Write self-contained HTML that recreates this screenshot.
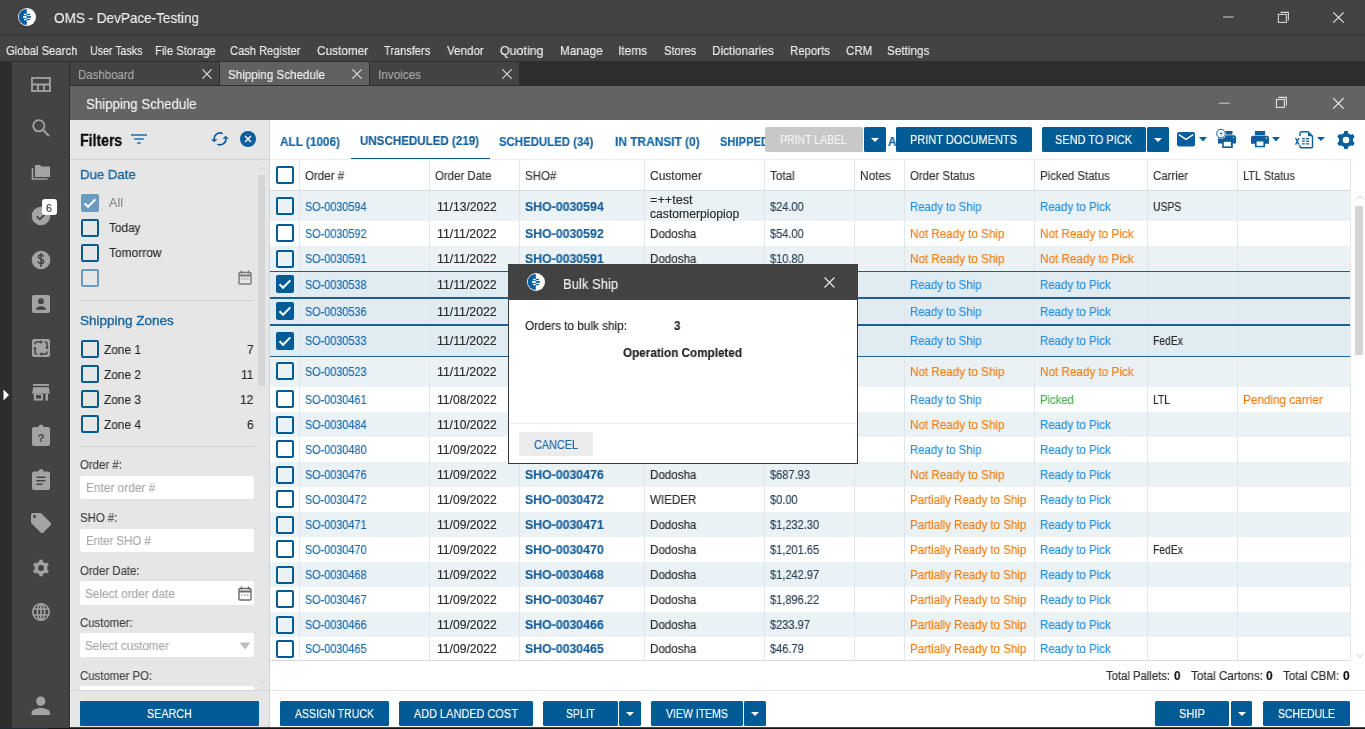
<!DOCTYPE html>
<html><head><meta charset="utf-8">
<style>
*{margin:0;padding:0;box-sizing:border-box}
html,body{width:1365px;height:729px;overflow:hidden;background:#434343;font-family:"Liberation Sans",sans-serif;position:relative}
.a{position:absolute}
.t{position:absolute;white-space:nowrap;height:100px;line-height:100px;will-change:transform;-webkit-text-stroke:0.15px currentColor}
svg{position:absolute;overflow:visible}
</style></head><body>

<div class="a" style="left:0px;top:0px;width:1365px;height:34px;background:#434343;"></div>
<div class="a" style="left:0px;top:34px;width:1365px;height:1px;background:#363636;"></div>
<div class="a" style="left:0px;top:35px;width:1365px;height:26px;background:#434343;"></div>
<div class="a" style="left:0px;top:61px;width:1365px;height:1px;background:#2e2e2e;"></div>
<div class="a" style="left:0px;top:62px;width:12px;height:667px;background:#2d2d2d;"></div>
<div class="a" style="left:12px;top:62px;width:58px;height:667px;background:#434343;"></div>
<div class="a" style="left:70px;top:61px;width:1295px;height:25px;background:#2e2e2e;"></div>
<div class="a" style="left:70px;top:86px;width:1295px;height:34px;background:#636363;"></div>
<div class="a" style="left:70px;top:120px;width:199px;height:607px;background:#e6e6e6;"></div>
<div class="a" style="left:269px;top:120px;width:1px;height:607px;background:#d4d4d4;"></div>
<div class="a" style="left:270px;top:120px;width:1095px;height:607px;background:#ffffff;"></div>
<div class="a" style="left:69px;top:62px;width:1px;height:666px;background:#2e2e2e;"></div>
<div class="a" style="left:70px;top:120px;width:1px;height:607px;background:#efefef;"></div>
<div class="a" style="left:0px;top:728px;width:48px;height:1px;background:#1c2e33;"></div>
<div class="a" style="left:48px;top:728px;width:1317px;height:1px;background:#151515;"></div>
<svg style="left:18px;top:8px" width="18" height="18" viewBox="0 0 18 18">
<circle cx="9" cy="9" r="9" fill="#fff"/>
<path d="M8.8 0.9 A8.1 8.1 0 0 0 8.8 17.1 Z" fill="#0a5fa0"/>
<rect x="6" y="5.8" width="2.8" height="1.4" fill="#fff"/><rect x="5.1" y="8.1" width="3.7" height="1.8" fill="#fff"/><rect x="6" y="10.8" width="2.8" height="1.4" fill="#fff"/>
<rect x="8.8" y="5.8" width="3.2" height="1.4" fill="#0a5fa0"/><rect x="8.8" y="8.1" width="4.1" height="1.8" fill="#0a5fa0"/><rect x="8.8" y="10.8" width="3.2" height="1.4" fill="#0a5fa0"/>
</svg>
<div class="t" style="left:53.5px;top:-31.9px;font-size:15.0px;color:#efefef;letter-spacing:0.00px;transform:scaleX(0.9013);transform-origin:0 0;">OMS - DevPace-Testing</div>
<svg style="left:1220px;top:8px" width="130" height="20" viewBox="0 0 130 20">
<rect x="3" y="8.4" width="10.5" height="1.2" fill="#bdbdbd"/>
<rect x="58.4" y="6.4" width="8" height="8" fill="none" stroke="#d6d6d6" stroke-width="1.1"/>
<path d="M60.4 4.4h8v8" fill="none" stroke="#d6d6d6" stroke-width="1.1"/>
<path d="M113.3 4.3l10.4 10.4M123.7 4.3L113.3 14.7" stroke="#e4e4e4" stroke-width="1.2"/>
</svg>
<div class="t" style="left:6.0px;top:1.3px;font-size:13.0px;color:#ececec;letter-spacing:0.00px;transform:scaleX(0.8655);transform-origin:0 0;">Global Search</div>
<div class="t" style="left:89.9px;top:1.3px;font-size:13.0px;color:#ececec;letter-spacing:0.00px;transform:scaleX(0.8181);transform-origin:0 0;">User Tasks</div>
<div class="t" style="left:154.9px;top:1.3px;font-size:13.0px;color:#ececec;letter-spacing:0.00px;transform:scaleX(0.8660);transform-origin:0 0;">File Storage</div>
<div class="t" style="left:230.2px;top:1.3px;font-size:13.0px;color:#ececec;letter-spacing:0.00px;transform:scaleX(0.8547);transform-origin:0 0;">Cash Register</div>
<div class="t" style="left:317.0px;top:1.3px;font-size:13.0px;color:#ececec;letter-spacing:0.00px;transform:scaleX(0.9086);transform-origin:0 0;">Customer</div>
<div class="t" style="left:384.4px;top:1.3px;font-size:13.0px;color:#ececec;letter-spacing:0.00px;transform:scaleX(0.8490);transform-origin:0 0;">Transfers</div>
<div class="t" style="left:446.7px;top:1.3px;font-size:13.0px;color:#ececec;letter-spacing:0.00px;transform:scaleX(0.8907);transform-origin:0 0;">Vendor</div>
<div class="t" style="left:499.5px;top:1.3px;font-size:13.0px;color:#ececec;letter-spacing:0.00px;transform:scaleX(0.9554);transform-origin:0 0;">Quoting</div>
<div class="t" style="left:559.6px;top:1.3px;font-size:13.0px;color:#ececec;letter-spacing:0.00px;transform:scaleX(0.9089);transform-origin:0 0;">Manage</div>
<div class="t" style="left:618.4px;top:1.3px;font-size:13.0px;color:#ececec;letter-spacing:0.00px;transform:scaleX(0.9124);transform-origin:0 0;">Items</div>
<div class="t" style="left:663.5px;top:1.3px;font-size:13.0px;color:#ececec;letter-spacing:0.00px;transform:scaleX(0.8570);transform-origin:0 0;">Stores</div>
<div class="t" style="left:711.8px;top:1.3px;font-size:13.0px;color:#ececec;letter-spacing:0.00px;transform:scaleX(0.9085);transform-origin:0 0;">Dictionaries</div>
<div class="t" style="left:789.6px;top:1.3px;font-size:13.0px;color:#ececec;letter-spacing:0.00px;transform:scaleX(0.8766);transform-origin:0 0;">Reports</div>
<div class="t" style="left:845.6px;top:1.3px;font-size:13.0px;color:#ececec;letter-spacing:0.00px;transform:scaleX(0.8850);transform-origin:0 0;">CRM</div>
<div class="t" style="left:887.1px;top:1.3px;font-size:13.0px;color:#ececec;letter-spacing:0.00px;transform:scaleX(0.9005);transform-origin:0 0;">Settings</div>
<div class="a" style="left:70px;top:62px;width:149px;height:23px;background:#434343;"></div>
<div class="a" style="left:220px;top:62px;width:149px;height:23px;background:#616161;"></div>
<div class="a" style="left:370px;top:62px;width:149px;height:23px;background:#434343;"></div>
<div class="t" style="left:78.1px;top:25.3px;font-size:12.5px;color:#a9a9a9;letter-spacing:0.00px;transform:scaleX(0.9158);transform-origin:0 0;">Dashboard</div>
<div class="t" style="left:228.2px;top:25.3px;font-size:12.5px;color:#f2f2f2;letter-spacing:0.00px;transform:scaleX(0.9305);transform-origin:0 0;">Shipping Schedule</div>
<div class="t" style="left:377.6px;top:25.3px;font-size:12.5px;color:#a9a9a9;letter-spacing:0.00px;transform:scaleX(0.9377);transform-origin:0 0;">Invoices</div>
<svg style="left:202px;top:69px" width="10" height="10"><path d="M0.4 0.4l9.2 9.2M9.6 0.4l-9.2 9.2" stroke="#dcdcdc" stroke-width="1.2"/></svg>
<svg style="left:351.7px;top:69px" width="10" height="10"><path d="M0.4 0.4l9.2 9.2M9.6 0.4l-9.2 9.2" stroke="#dcdcdc" stroke-width="1.2"/></svg>
<svg style="left:501.6px;top:69px" width="10" height="10"><path d="M0.4 0.4l9.2 9.2M9.6 0.4l-9.2 9.2" stroke="#dcdcdc" stroke-width="1.2"/></svg>
<div class="t" style="left:86.0px;top:54.3px;font-size:14.5px;color:#f4f4f4;letter-spacing:0.00px;transform:scaleX(0.9146);transform-origin:0 0;">Shipping Schedule</div>
<svg style="left:1215px;top:95px" width="135" height="16" viewBox="0 0 135 16">
<rect x="4" y="7.6" width="10.7" height="1.2" fill="#bdbdbd"/>
<rect x="61.4" y="4.4" width="8" height="8" fill="none" stroke="#e0e0e0" stroke-width="1.1"/>
<path d="M63.4 2.4h8v8" fill="none" stroke="#e0e0e0" stroke-width="1.1"/>
<path d="M118.2 3.2l10.4 10.4M128.6 3.2L118.2 13.6" stroke="#ececec" stroke-width="1.2"/>
</svg>
<svg style="left:30.5px;top:76.5px" width="20" height="15" viewBox="0 0 20 15"><rect x="1" y="1" width="18" height="13" fill="none" stroke="#a3a3a3" stroke-width="1.8"/><path d="M1 7.5h18M7 7.5v6.5M13 7.5v6.5" stroke="#a3a3a3" stroke-width="1.8"/></svg>
<svg style="left:30.5px;top:118.0px" width="20" height="20" viewBox="0 0 20 20"><circle cx="7.8" cy="7.8" r="5.6" fill="none" stroke="#a3a3a3" stroke-width="1.8"/><path d="M12 12l6 6" stroke="#a3a3a3" stroke-width="1.9"/></svg>
<svg style="left:30.5px;top:164.0px" width="20" height="16" viewBox="0 0 20 16"><path d="M1.5 4v11h15" fill="none" stroke="#a3a3a3" stroke-width="1.6"/><path d="M4 1h5l1.5 1.6H19v10.4H4z" fill="#a3a3a3"/></svg>
<svg style="left:28.5px;top:204.0px" width="24" height="24" viewBox="0 0 24 24"><circle cx="12" cy="12" r="9.3" fill="#a3a3a3"/><path d="M7.8 12.3l3 3 5.5-5.5" fill="none" stroke="#434343" stroke-width="1.7"/></svg>
<div class="a" style="left:42px;top:199px;width:15px;height:16px;background:#fff;border-radius:3px"></div>
<div class="t" style="left:46.0px;top:157.8px;font-size:11.0px;color:#333;letter-spacing:0.00px;transform:scaleX(0.9500);transform-origin:0 0;">6</div>
<svg style="left:28.5px;top:248.0px" width="24" height="24" viewBox="0 0 24 24"><circle cx="12" cy="12" r="9.3" fill="#a3a3a3"/><path d="M14.6 8.6c-.3-1.1-1.3-1.7-2.6-1.7-1.5 0-2.6.8-2.6 2 0 2.6 5.3 1.6 5.3 4.3 0 1.3-1.1 2.1-2.7 2.1-1.5 0-2.6-.7-2.8-1.9M12 5.3v13.4" fill="none" stroke="#434343" stroke-width="1.5"/></svg>
<svg style="left:31.5px;top:295.0px" width="18" height="18" viewBox="0 0 18 18"><rect x="0" y="0" width="18" height="18" rx="2" fill="#a3a3a3"/><circle cx="9" cy="6.2" r="2.9" fill="#434343"/><path d="M3.8 14.8c0-2.4 3-3.6 5.2-3.6s5.2 1.2 5.2 3.6z" fill="#434343"/></svg>
<svg style="left:31.5px;top:339.0px" width="18" height="18" viewBox="0 0 18 18"><rect x="0" y="0" width="18" height="18" rx="2.2" fill="#a3a3a3"/><path d="M2.9 5.6V4.6Q2.9 3.1 4.4 3.1H8.6M12.8 3.1H13.5Q15 3.1 15 4.6V8.2M15.1 12.4V13.5Q15.1 15 13.6 15H9.8M5.2 15H4.5Q3 15 3 13.5V9.8" fill="none" stroke="#434343" stroke-width="1.5"/><path d="M8.3 1.2L11 3.1 8.3 5zM13.1 7.9L15 10.6 16.9 7.9zM10.1 13.1L7.4 15 10.1 16.9zM1.1 10.1L3 7.4 4.9 10.1z" fill="#434343"/></svg>
<svg style="left:30.5px;top:383.5px" width="20" height="17" viewBox="0 0 20 17"><rect x="2" y="0" width="16" height="1.8" fill="#a3a3a3"/><path d="M1 9.5L2.3 3.2h15.4L19 9.5z" fill="#a3a3a3"/><path d="M2.8 9.5v7h9.2v-7zM14.5 9.5h2.5v7h-2.5z" fill="#a3a3a3"/><rect x="5" y="11" width="5" height="3.6" fill="#434343"/></svg>
<svg style="left:31.5px;top:423.5px" width="18" height="22" viewBox="0 0 18 22"><rect x="0" y="3" width="18" height="19" rx="2" fill="#a3a3a3"/><path d="M6 3.5h6L10.5 0.8h-3z" fill="#a3a3a3"/><text x="9" y="17.5" font-size="11" font-weight="bold" text-anchor="middle" fill="#434343" font-family="Liberation Sans">?</text></svg>
<svg style="left:31.5px;top:468.5px" width="18" height="21" viewBox="0 0 18 21"><rect x="0" y="2.5" width="18" height="18.5" rx="2" fill="#a3a3a3"/><path d="M6 3h6L10.5 0.3h-3z" fill="#a3a3a3"/><path d="M4.5 8.2h9M4.5 11.7h9M4.5 15.2h6" stroke="#434343" stroke-width="1.6"/></svg>
<svg style="left:28.5px;top:511.0px" width="24" height="24" viewBox="0 0 24 24"><path d="M21.41 11.58l-9-9C12.05 2.22 11.55 2 11 2H4c-1.1 0-2 .9-2 2v7c0 .55.22 1.05.59 1.42l9 9c.36.36.86.58 1.41.58.55 0 1.05-.22 1.41-.59l7-7c.37-.36.59-.86.59-1.41 0-.55-.23-1.06-.59-1.42zM5.5 7C4.67 7 4 6.33 4 5.5S4.67 4 5.5 4 7 4.67 7 5.5 6.33 7 5.5 7z" fill="#a3a3a3" transform="translate(12 12) rotate(0) translate(-12 -12)"/></svg>
<svg style="left:30.5px;top:557.7px" width="20" height="20" viewBox="0 0 24 24"><path fill-rule="evenodd" d="M9.78 4.73 L10.09 2.18 L13.91 2.18 L14.22 4.73 A7.60 7.60 0 0 1 17.18 6.44 L19.55 5.44 L21.46 8.74 L19.41 10.29 A7.60 7.60 0 0 1 19.41 13.71 L21.46 15.26 L19.55 18.56 L17.18 17.56 A7.60 7.60 0 0 1 14.22 19.27 L13.91 21.82 L10.09 21.82 L9.78 19.27 A7.60 7.60 0 0 1 6.82 17.56 L4.45 18.56 L2.54 15.26 L4.59 13.71 A7.60 7.60 0 0 1 4.59 10.29 L2.54 8.74 L4.45 5.44 L6.82 6.44 A7.60 7.60 0 0 1 9.78 4.73 Z M8.50 12.00 a3.50 3.50 0 1 0 7.00 0 a3.50 3.50 0 1 0 -7.00 0Z" fill="#a3a3a3"/></svg>
<svg style="left:30.5px;top:602.0px" width="20" height="20" viewBox="0 0 20 20"><g fill="none" stroke="#a3a3a3" stroke-width="1.6"><circle cx="10" cy="10" r="8.2"/><ellipse cx="10" cy="10" rx="3.6" ry="8.2"/><path d="M2 7h16M2 13h16M10 1.8v16.4"/></g></svg>
<svg style="left:26.7px;top:692.2px" width="27.6" height="27.6" viewBox="0 0 24 24"><path d="M12 12c2.21 0 4-1.79 4-4s-1.79-4-4-4-4 1.79-4 4 1.79 4 4 4zm0 2c-2.67 0-8 1.34-8 4v2h16v-2c0-2.66-5.33-4-8-4z" fill="#a3a3a3"/></svg>
<svg style="left:1.5px;top:389.0px" width="8" height="12" viewBox="0 0 8 12"><path d="M1.5 0.5L7 6 1.5 11.5z" fill="#fff"/></svg>
<div class="t" style="left:80.0px;top:90.8px;font-size:16.0px;color:#0a0a0a;font-weight:bold;letter-spacing:0.00px;transform:scaleX(0.8789);transform-origin:0 0;-webkit-text-stroke:0.3px #0a0a0a;">Filters</div>
<svg style="left:131.0px;top:133.8px" width="16" height="10" viewBox="0 0 16 10"><path d="M0 0.9h16M3.2 4.9h9.6M6.2 8.9h3.6" stroke="#1b6fb0" stroke-width="1.5"/></svg>
<svg style="left:208px;top:128px" width="24" height="22" viewBox="0 0 24 22"><path d="M14.8 5.6A5.9 5.9 0 0 0 6.2 11.3M9.3 16.1A5.9 5.9 0 0 0 18 10.7" fill="none" stroke="#0b5d9b" stroke-width="1.6"/><path d="M3 11.2h6.4l-3.2 3z M14.5 10.7h6.3l-3.2-3z" fill="#0b5d9b"/></svg>
<svg style="left:240.0px;top:131.0px" width="16" height="16" viewBox="0 0 16 16"><circle cx="8" cy="8" r="8" fill="#0b5d9b"/><path d="M5 5l6 6M11 5l-6 6" stroke="#fff" stroke-width="1.5"/></svg>
<div class="a" style="left:70px;top:159px;width:199px;height:1px;background:#d2d2d2;"></div>
<div class="a" style="left:258px;top:175px;width:7px;height:211px;background:#d5d5d5;"></div>
<svg style="left:257.5px;top:165.5px" width="8" height="5" viewBox="0 0 8 5"><path d="M0.5 4.5L4 1l3.5 3.5" fill="none" stroke="#d0d0d0" stroke-width="1"/></svg>
<svg style="left:257.5px;top:678.5px" width="8" height="5" viewBox="0 0 8 5"><path d="M0.5 0.5L4 4l3.5-3.5" fill="none" stroke="#d0d0d0" stroke-width="1"/></svg>
<div class="t" style="left:79.9px;top:125.3px;font-size:13.5px;color:#1566a4;letter-spacing:0.00px;transform:scaleX(0.9766);transform-origin:0 0;-webkit-text-stroke:0.35px currentColor;">Due Date</div>
<div class="a" style="left:81px;top:194px;width:18px;height:18px;background:#6a9cc2;border-radius:2px"></div>
<svg style="left:81px;top:194px" width="18" height="18" viewBox="0 0 18 18"><path d="M3.5 9.2l3.6 3.6 7.2-7.4" fill="none" stroke="#fff" stroke-width="2"/></svg>
<div class="t" style="left:108.8px;top:153.3px;font-size:12.5px;color:#8a8a8a;letter-spacing:0.00px;transform:scaleX(1.0078);transform-origin:0 0;">All</div>
<div class="a" style="left:81px;top:219px;width:18px;height:18px;border:2px solid #015c95;border-radius:2px"></div>
<div class="t" style="left:108.8px;top:178.3px;font-size:12.5px;color:#2a2a2a;letter-spacing:0.00px;transform:scaleX(0.9444);transform-origin:0 0;">Today</div>
<div class="a" style="left:81px;top:244px;width:18px;height:18px;border:2px solid #015c95;border-radius:2px"></div>
<div class="t" style="left:108.8px;top:203.3px;font-size:12.5px;color:#2a2a2a;letter-spacing:0.00px;transform:scaleX(0.9568);transform-origin:0 0;">Tomorrow</div>
<div class="a" style="left:81px;top:269px;width:18px;height:18px;border:2px solid #6a9cc2;border-radius:2px"></div>
<svg style="left:238.0px;top:270.0px" width="14" height="15" viewBox="0 0 14 15"><rect x="1" y="2.5" width="12" height="11.5" rx="1" fill="none" stroke="#7a7a7a" stroke-width="1.4"/><path d="M1 5.5h12" stroke="#7a7a7a" stroke-width="2"/><path d="M3.5 0.5v3M10.5 0.5v3" stroke="#7a7a7a" stroke-width="1.4"/><path d="M3.5 9h1.4M6.3 9h1.4M9.1 9h1.4" stroke="#7a7a7a" stroke-width="1.2"/></svg>
<div class="a" style="left:80px;top:300px;width:174px;height:1px;background:#d0d0d0;"></div>
<div class="t" style="left:79.6px;top:271.1px;font-size:13.5px;color:#1566a4;letter-spacing:0.00px;transform:scaleX(0.9998);transform-origin:0 0;-webkit-text-stroke:0.35px currentColor;">Shipping Zones</div>
<div class="a" style="left:81px;top:340px;width:18px;height:18px;border:2px solid #015c95;border-radius:2px"></div>
<div class="t" style="left:103.6px;top:299.8px;font-size:12.5px;color:#2a2a2a;letter-spacing:0.00px;transform:scaleX(0.9508);transform-origin:0 0;">Zone 1</div>
<div class="t" style="left:247.0px;top:299.8px;font-size:12.5px;color:#2a2a2a;letter-spacing:0.00px;transform:scaleX(0.9500);transform-origin:0 0;">7</div>
<div class="a" style="left:81px;top:365px;width:18px;height:18px;border:2px solid #015c95;border-radius:2px"></div>
<div class="t" style="left:103.6px;top:324.8px;font-size:12.5px;color:#2a2a2a;letter-spacing:0.00px;transform:scaleX(0.9508);transform-origin:0 0;">Zone 2</div>
<div class="t" style="left:241.3px;top:324.8px;font-size:12.5px;color:#2a2a2a;letter-spacing:0.00px;transform:scaleX(0.9500);transform-origin:0 0;">11</div>
<div class="a" style="left:81px;top:390px;width:18px;height:18px;border:2px solid #015c95;border-radius:2px"></div>
<div class="t" style="left:103.6px;top:349.8px;font-size:12.5px;color:#2a2a2a;letter-spacing:0.00px;transform:scaleX(0.9508);transform-origin:0 0;">Zone 3</div>
<div class="t" style="left:240.4px;top:349.8px;font-size:12.5px;color:#2a2a2a;letter-spacing:0.00px;transform:scaleX(0.9500);transform-origin:0 0;">12</div>
<div class="a" style="left:81px;top:415px;width:18px;height:18px;border:2px solid #015c95;border-radius:2px"></div>
<div class="t" style="left:103.6px;top:374.8px;font-size:12.5px;color:#2a2a2a;letter-spacing:0.00px;transform:scaleX(0.9508);transform-origin:0 0;">Zone 4</div>
<div class="t" style="left:247.0px;top:374.8px;font-size:12.5px;color:#2a2a2a;letter-spacing:0.00px;transform:scaleX(0.9500);transform-origin:0 0;">6</div>
<div class="a" style="left:80px;top:446px;width:174px;height:1px;background:#d0d0d0;"></div>
<div class="t" style="left:80.1px;top:414.8px;font-size:12.0px;color:#404040;letter-spacing:0.00px;transform:scaleX(0.9519);transform-origin:0 0;">Order #:</div>
<div class="a" style="left:80px;top:476px;width:174px;height:23px;background:#fff;border-radius:2px"></div>
<div class="t" style="left:86.0px;top:438.3px;font-size:12.5px;color:#a8a8a8;letter-spacing:0.00px;transform:scaleX(0.9499);transform-origin:0 0;">Enter order #</div>
<div class="t" style="left:80.1px;top:467.8px;font-size:12.0px;color:#404040;letter-spacing:0.00px;transform:scaleX(0.9500);transform-origin:0 0;">SHO #:</div>
<div class="a" style="left:80px;top:529px;width:174px;height:23px;background:#fff;border-radius:2px"></div>
<div class="t" style="left:86.0px;top:491.3px;font-size:12.5px;color:#a8a8a8;letter-spacing:0.00px;transform:scaleX(0.9130);transform-origin:0 0;">Enter SHO #</div>
<div class="t" style="left:80.1px;top:520.8px;font-size:12.0px;color:#404040;letter-spacing:0.00px;transform:scaleX(0.9500);transform-origin:0 0;">Order Date:</div>
<div class="a" style="left:80px;top:581px;width:174px;height:24px;background:#fff;border-radius:2px"></div>
<div class="t" style="left:84.6px;top:543.8px;font-size:12.5px;color:#a8a8a8;letter-spacing:0.00px;transform:scaleX(0.9454);transform-origin:0 0;">Select order date</div>
<svg style="left:237.5px;top:585.5px" width="14" height="15" viewBox="0 0 14 15"><rect x="1" y="2.5" width="12" height="11.5" rx="1" fill="none" stroke="#6a6a6a" stroke-width="1.4"/><path d="M1 5.5h12" stroke="#6a6a6a" stroke-width="2"/><path d="M3.5 0.5v3M10.5 0.5v3" stroke="#6a6a6a" stroke-width="1.4"/><path d="M3.5 9h1.4M6.3 9h1.4M9.1 9h1.4" stroke="#6a6a6a" stroke-width="1.2"/></svg>
<div class="t" style="left:80.1px;top:572.8px;font-size:12.0px;color:#404040;letter-spacing:0.00px;transform:scaleX(0.9500);transform-origin:0 0;">Customer:</div>
<div class="a" style="left:80px;top:633px;width:174px;height:24px;background:#fff;border-radius:2px"></div>
<div class="t" style="left:84.6px;top:595.8px;font-size:12.5px;color:#a8a8a8;letter-spacing:0.00px;transform:scaleX(0.9373);transform-origin:0 0;">Select customer</div>
<svg style="left:239.0px;top:642.0px" width="12" height="8" viewBox="0 0 12 8"><path d="M0.5 0.5h11L6 7.5z" fill="#bdbdbd"/></svg>
<div class="t" style="left:79.6px;top:625.8px;font-size:12.0px;color:#444;letter-spacing:0.00px;transform:scaleX(0.9500);transform-origin:0 0;">Customer PO:</div>
<div class="a" style="left:80px;top:686px;width:174px;height:4px;background:#fff;border-radius:2px 2px 0 0"></div>
<div class="a" style="left:70px;top:690px;width:199px;height:1px;background:#d6d6d6;"></div>
<div class="a" style="left:80px;top:701px;width:179px;height:25px;background:#015c95;border-radius:1px"></div>
<div class="t" style="left:147.1px;top:664.3px;font-size:12.5px;color:#fff;letter-spacing:0.00px;transform:scaleX(0.8638);transform-origin:0 0;">SEARCH</div>
<div class="t" style="left:279.8px;top:92.1px;font-size:12.5px;color:#1665a3;font-weight:bold;letter-spacing:0.00px;transform:scaleX(0.9422);transform-origin:0 0;">ALL (1006)</div>
<div class="t" style="left:360.1px;top:90.8px;font-size:12.5px;color:#135e99;font-weight:bold;letter-spacing:0.00px;transform:scaleX(0.9261);transform-origin:0 0;">UNSCHEDULED (219)</div>
<div class="a" style="left:350.5px;top:158px;width:139.5px;height:2.4px;background:#0b5c99;"></div>
<div class="t" style="left:499.3px;top:92.1px;font-size:12.5px;color:#1665a3;font-weight:bold;letter-spacing:0.00px;transform:scaleX(0.9122);transform-origin:0 0;">SCHEDULED (34)</div>
<div class="t" style="left:614.9px;top:92.1px;font-size:12.5px;color:#1665a3;font-weight:bold;letter-spacing:0.00px;transform:scaleX(0.9529);transform-origin:0 0;">IN TRANSIT (0)</div>
<div class="t" style="left:720.1px;top:92.1px;font-size:12.5px;color:#1665a3;font-weight:bold;letter-spacing:0.00px;transform:scaleX(0.8935);transform-origin:0 0;">SHIPPED (12)</div>
<div class="a" style="left:765px;top:127px;width:98px;height:25px;background:#c8c8c8;border-radius:2px"></div>
<div class="t" style="left:779.6px;top:90.3px;font-size:12.5px;color:#f4f4f4;letter-spacing:0.00px;transform:scaleX(0.8410);transform-origin:0 0;">PRINT LABEL</div>
<div class="a" style="left:864px;top:127px;width:22px;height:25px;background:#015c95;border-radius:1.5px"></div>
<svg style="left:871.0px;top:138.0px" width="8" height="4" viewBox="0 0 8 4"><path d="M0 0h8L4 4z" fill="#fff"/></svg>
<div class="t" style="left:887.6px;top:92.1px;font-size:12.5px;color:#1665a3;font-weight:bold;letter-spacing:0.00px;transform:scaleX(0.9500);transform-origin:0 0;">A</div>
<div class="a" style="left:896px;top:127px;width:136px;height:25px;background:#015c95;border-radius:1.5px"></div>
<div class="t" style="left:910.1px;top:90.3px;font-size:12.5px;color:#fff;letter-spacing:0.00px;transform:scaleX(0.8821);transform-origin:0 0;">PRINT DOCUMENTS</div>
<div class="a" style="left:1042px;top:127px;width:104px;height:25px;background:#015c95;border-radius:1.5px"></div>
<div class="t" style="left:1055.1px;top:90.3px;font-size:12.5px;color:#fff;letter-spacing:0.00px;transform:scaleX(0.8774);transform-origin:0 0;">SEND TO PICK</div>
<div class="a" style="left:1147px;top:127px;width:22px;height:25px;background:#015c95;border-radius:1.5px"></div>
<svg style="left:1154.0px;top:138.0px" width="8" height="4" viewBox="0 0 8 4"><path d="M0 0h8L4 4z" fill="#fff"/></svg>
<svg style="left:1177.0px;top:131.9px" width="18" height="14.5" viewBox="0 0 18 14.5"><rect x="0" y="0" width="18" height="14.5" rx="2" fill="#0b5d9b"/><path d="M1.8 2.6l7.2 4.8 7.2-4.8" fill="none" stroke="#fff" stroke-width="1.3"/></svg>
<svg style="left:1198.5px;top:136.8px" width="8" height="4.5" viewBox="0 0 8 4.5"><path d="M0 0h8L4 4.5z" fill="#0b5d9b"/></svg>
<svg style="left:1217.5px;top:131.2px" width="18" height="17" viewBox="0 0 18 17"><path d="M4.5 0h10v3.6h-10z" fill="#0b5d9b"/><path d="M2 4.2h14a2 2 0 0 1 2 2v6.3h-3.2v4.5H4.2v-4.5H0V6.2a2 2 0 0 1 2-2z" fill="#0b5d9b"/><rect x="5.8" y="10.8" width="7.2" height="4.6" fill="#fff"/><circle cx="15.5" cy="6.6" r=".7" fill="#fff"/><circle cx="3" cy="2.6" r="5.2" fill="#fff"/><circle cx="3" cy="2.6" r="4.3" fill="none" stroke="#0b5d9b" stroke-width="1"/><path d="M3.6 0L1.8 3h1.6l-.8 2.4 2-3.2H3z" fill="#0b5d9b"/></svg>
<svg style="left:1251.0px;top:131.2px" width="18" height="16.2" viewBox="0 0 18 16.2"><path d="M3.9 0h10.2v4.3H3.9z" fill="#0b5d9b"/><path d="M2 4.8h14a2 2 0 0 1 2 2v6H14.1v3.4H3.9v-3.4H0v-6a2 2 0 0 1 2-2z" fill="#0b5d9b"/><rect x="5.6" y="10.5" width="6.8" height="4.3" fill="#fff"/><circle cx="15.3" cy="7" r=".7" fill="#fff"/></svg>
<svg style="left:1272.3px;top:137.2px" width="8" height="4.5" viewBox="0 0 8 4.5"><path d="M0 0h8L4 4.5z" fill="#0b5d9b"/></svg>
<svg style="left:1294.5px;top:130.9px" width="19" height="17" viewBox="0 0 19 17"><path d="M5 5V2.2A1.5 1.5 0 0 1 6.5 0.7h6.5l4.5 4.5v10.3a1.2 1.2 0 0 1-1.2 1.2H6.2A1.2 1.2 0 0 1 5 15.5v-1.5" fill="none" stroke="#0b5d9b" stroke-width="1.4"/><path d="M13 0.7v4.5h4.5z" fill="#0b5d9b"/><path d="M0.6 7l3.4 6.6M4 7L0.6 13.6" stroke="#0b5d9b" stroke-width="1.3"/><path d="M7 7.6h2.8M11 7.6h3.2M7 10.2h2.8M11 10.2h3.2M7 12.8h2.8M11 12.8h3.2" stroke="#0b5d9b" stroke-width="1.3"/></svg>
<svg style="left:1316.5px;top:136.9px" width="8" height="4" viewBox="0 0 8 4"><path d="M0 0h8L4 4z" fill="#0b5d9b"/></svg>
<svg style="left:1335.0px;top:128.5px" width="22" height="22" viewBox="0 0 24 24"><path fill-rule="evenodd" d="M9.72 4.54 L10.09 2.18 L13.91 2.18 L14.28 4.54 A7.80 7.80 0 0 1 17.32 6.30 L19.55 5.44 L21.46 8.74 L19.60 10.25 A7.80 7.80 0 0 1 19.60 13.75 L21.46 15.26 L19.55 18.56 L17.32 17.70 A7.80 7.80 0 0 1 14.28 19.46 L13.91 21.82 L10.09 21.82 L9.72 19.46 A7.80 7.80 0 0 1 6.68 17.70 L4.45 18.56 L2.54 15.26 L4.40 13.75 A7.80 7.80 0 0 1 4.40 10.25 L2.54 8.74 L4.45 5.44 L6.68 6.30 A7.80 7.80 0 0 1 9.72 4.54 Z M8.40 12.00 a3.60 3.60 0 1 0 7.20 0 a3.60 3.60 0 1 0 -7.20 0Z" fill="#0b5d9b"/></svg>
<div class="a" style="left:270px;top:159px;width:1081px;height:1px;background:#eeeeee;"></div>
<div class="a" style="left:270px;top:190px;width:1081px;height:1px;background:#d9dde0;"></div>
<div class="a" style="left:276px;top:166px;width:18px;height:18px;border:2px solid #015c95;border-radius:2px"></div>
<div class="t" style="left:305.0px;top:125.8px;font-size:12.0px;color:#333;letter-spacing:0.00px;transform:scaleX(0.9611);transform-origin:0 0;">Order #</div>
<div class="t" style="left:435.1px;top:125.8px;font-size:12.0px;color:#333;letter-spacing:0.00px;transform:scaleX(0.9519);transform-origin:0 0;">Order Date</div>
<div class="t" style="left:524.7px;top:125.8px;font-size:12.0px;color:#333;letter-spacing:0.00px;transform:scaleX(0.9578);transform-origin:0 0;">SHO#</div>
<div class="t" style="left:649.8px;top:125.8px;font-size:12.0px;color:#333;letter-spacing:0.00px;transform:scaleX(0.9978);transform-origin:0 0;">Customer</div>
<div class="t" style="left:769.7px;top:125.8px;font-size:12.0px;color:#333;letter-spacing:0.00px;transform:scaleX(0.9705);transform-origin:0 0;">Total</div>
<div class="t" style="left:859.7px;top:125.8px;font-size:12.0px;color:#333;letter-spacing:0.00px;transform:scaleX(0.9857);transform-origin:0 0;">Notes</div>
<div class="t" style="left:909.8px;top:125.8px;font-size:12.0px;color:#333;letter-spacing:0.00px;transform:scaleX(0.9526);transform-origin:0 0;">Order Status</div>
<div class="t" style="left:1040.0px;top:125.8px;font-size:12.0px;color:#333;letter-spacing:0.00px;transform:scaleX(0.9513);transform-origin:0 0;">Picked Status</div>
<div class="t" style="left:1152.8px;top:125.8px;font-size:12.0px;color:#333;letter-spacing:0.00px;transform:scaleX(0.9545);transform-origin:0 0;">Carrier</div>
<div class="t" style="left:1243.0px;top:125.8px;font-size:12.0px;color:#333;letter-spacing:0.00px;transform:scaleX(0.9137);transform-origin:0 0;">LTL Status</div>
<div class="a" style="left:270px;top:191px;width:1081px;height:30px;background:#eaf2f6;"></div>
<div class="a" style="left:270px;top:221px;width:1081px;height:25px;background:#ffffff;"></div>
<div class="a" style="left:270px;top:246px;width:1081px;height:25px;background:#eaf2f6;"></div>
<div class="a" style="left:270px;top:271px;width:1081px;height:26px;background:#e1ebf2;"></div>
<div class="a" style="left:270px;top:297px;width:1081px;height:28px;background:#e1ebf2;"></div>
<div class="a" style="left:270px;top:325px;width:1081px;height:31px;background:#e1ebf2;"></div>
<div class="a" style="left:270px;top:356px;width:1081px;height:31px;background:#eaf2f6;"></div>
<div class="a" style="left:270px;top:387px;width:1081px;height:25px;background:#ffffff;"></div>
<div class="a" style="left:270px;top:412px;width:1081px;height:25px;background:#eaf2f6;"></div>
<div class="a" style="left:270px;top:437px;width:1081px;height:25px;background:#ffffff;"></div>
<div class="a" style="left:270px;top:462px;width:1081px;height:25px;background:#eaf2f6;"></div>
<div class="a" style="left:270px;top:487px;width:1081px;height:25px;background:#ffffff;"></div>
<div class="a" style="left:270px;top:512px;width:1081px;height:25px;background:#eaf2f6;"></div>
<div class="a" style="left:270px;top:537px;width:1081px;height:25px;background:#ffffff;"></div>
<div class="a" style="left:270px;top:562px;width:1081px;height:25px;background:#eaf2f6;"></div>
<div class="a" style="left:270px;top:587px;width:1081px;height:25px;background:#ffffff;"></div>
<div class="a" style="left:270px;top:612px;width:1081px;height:25px;background:#eaf2f6;"></div>
<div class="a" style="left:270px;top:637px;width:1081px;height:23px;background:#ffffff;"></div>
<div class="a" style="left:299.0px;top:159px;width:1px;height:501px;background:#e1e6ea;"></div>
<div class="a" style="left:429.0px;top:159px;width:1px;height:501px;background:#e1e6ea;"></div>
<div class="a" style="left:519.0px;top:159px;width:1px;height:501px;background:#e1e6ea;"></div>
<div class="a" style="left:644.0px;top:159px;width:1px;height:501px;background:#e1e6ea;"></div>
<div class="a" style="left:764.0px;top:159px;width:1px;height:501px;background:#e1e6ea;"></div>
<div class="a" style="left:854.0px;top:159px;width:1px;height:501px;background:#e1e6ea;"></div>
<div class="a" style="left:904.0px;top:159px;width:1px;height:501px;background:#e1e6ea;"></div>
<div class="a" style="left:1034.0px;top:159px;width:1px;height:501px;background:#e1e6ea;"></div>
<div class="a" style="left:1147.0px;top:159px;width:1px;height:501px;background:#e1e6ea;"></div>
<div class="a" style="left:1237.0px;top:159px;width:1px;height:501px;background:#e1e6ea;"></div>
<div class="a" style="left:270px;top:660px;width:1081px;height:1px;background:#dadada;"></div>
<div class="a" style="left:276px;top:197px;width:18px;height:18px;border:2px solid #015c95;border-radius:2px"></div>
<div class="t" style="left:305.0px;top:156.8px;font-size:12.0px;color:#1a68a8;letter-spacing:0.00px;transform:scaleX(0.9037);transform-origin:0 0;">SO-0030594</div>
<div class="t" style="left:437.3px;top:156.8px;font-size:12.0px;color:#2b2b2b;letter-spacing:0.00px;transform:scaleX(1.0090);transform-origin:0 0;">11/13/2022</div>
<div class="t" style="left:524.7px;top:156.8px;font-size:12.5px;color:#155e98;font-weight:bold;letter-spacing:0.00px;transform:scaleX(0.9848);transform-origin:0 0;">SHO-0030594</div>
<div class="t" style="left:649.8px;top:149.8px;font-size:12.0px;color:#2b2b2b;letter-spacing:0.00px;transform:scaleX(1.0554);transform-origin:0 0;">=++test</div>
<div class="t" style="left:649.8px;top:164.3px;font-size:12.0px;color:#2b2b2b;letter-spacing:0.00px;transform:scaleX(1.0142);transform-origin:0 0;">castomerpiopiop</div>
<div class="t" style="left:769.7px;top:156.8px;font-size:12.0px;color:#2a3f55;letter-spacing:0.00px;transform:scaleX(0.9200);transform-origin:0 0;">$24.00</div>
<div class="t" style="left:909.8px;top:156.8px;font-size:12.0px;color:#2590e0;letter-spacing:0.00px;transform:scaleX(0.9498);transform-origin:0 0;">Ready to Ship</div>
<div class="t" style="left:1040.0px;top:156.8px;font-size:12.0px;color:#2590e0;letter-spacing:0.00px;transform:scaleX(0.9563);transform-origin:0 0;">Ready to Pick</div>
<div class="t" style="left:1152.8px;top:156.8px;font-size:12.0px;color:#2b2b2b;letter-spacing:0.00px;transform:scaleX(0.8600);transform-origin:0 0;">USPS</div>
<div class="a" style="left:276px;top:224px;width:18px;height:18px;border:2px solid #015c95;border-radius:2px"></div>
<div class="t" style="left:305.0px;top:184.3px;font-size:12.0px;color:#1a68a8;letter-spacing:0.00px;transform:scaleX(0.9037);transform-origin:0 0;">SO-0030592</div>
<div class="t" style="left:437.3px;top:184.3px;font-size:12.0px;color:#2b2b2b;letter-spacing:0.00px;transform:scaleX(1.0244);transform-origin:0 0;">11/11/2022</div>
<div class="t" style="left:524.7px;top:184.3px;font-size:12.5px;color:#155e98;font-weight:bold;letter-spacing:0.00px;transform:scaleX(0.9848);transform-origin:0 0;">SHO-0030592</div>
<div class="t" style="left:649.8px;top:184.3px;font-size:12.0px;color:#2b2b2b;letter-spacing:0.00px;transform:scaleX(0.9660);transform-origin:0 0;">Dodosha</div>
<div class="t" style="left:769.7px;top:184.3px;font-size:12.0px;color:#2a3f55;letter-spacing:0.00px;transform:scaleX(0.9200);transform-origin:0 0;">$54.00</div>
<div class="t" style="left:909.8px;top:184.3px;font-size:12.0px;color:#f07d12;letter-spacing:0.00px;transform:scaleX(0.9693);transform-origin:0 0;">Not Ready to Ship</div>
<div class="t" style="left:1040.0px;top:184.3px;font-size:12.0px;color:#f07d12;letter-spacing:0.00px;transform:scaleX(0.9746);transform-origin:0 0;">Not Ready to Pick</div>
<div class="a" style="left:276px;top:250px;width:18px;height:18px;border:2px solid #015c95;border-radius:2px"></div>
<div class="t" style="left:305.0px;top:209.3px;font-size:12.0px;color:#1a68a8;letter-spacing:0.00px;transform:scaleX(0.9037);transform-origin:0 0;">SO-0030591</div>
<div class="t" style="left:437.3px;top:209.3px;font-size:12.0px;color:#2b2b2b;letter-spacing:0.00px;transform:scaleX(1.0244);transform-origin:0 0;">11/11/2022</div>
<div class="t" style="left:524.7px;top:209.3px;font-size:12.5px;color:#155e98;font-weight:bold;letter-spacing:0.00px;transform:scaleX(0.9848);transform-origin:0 0;">SHO-0030591</div>
<div class="t" style="left:649.8px;top:209.3px;font-size:12.0px;color:#2b2b2b;letter-spacing:0.00px;transform:scaleX(0.9660);transform-origin:0 0;">Dodosha</div>
<div class="t" style="left:769.7px;top:209.3px;font-size:12.0px;color:#2a3f55;letter-spacing:0.00px;transform:scaleX(0.9200);transform-origin:0 0;">$10.80</div>
<div class="t" style="left:909.8px;top:209.3px;font-size:12.0px;color:#f07d12;letter-spacing:0.00px;transform:scaleX(0.9693);transform-origin:0 0;">Not Ready to Ship</div>
<div class="t" style="left:1040.0px;top:209.3px;font-size:12.0px;color:#f07d12;letter-spacing:0.00px;transform:scaleX(0.9746);transform-origin:0 0;">Not Ready to Pick</div>
<div class="a" style="left:276px;top:275px;width:18px;height:18px;background:#015c95;border-radius:2px"></div>
<svg style="left:276px;top:275px" width="18" height="18" viewBox="0 0 18 18"><path d="M3.5 9.2l3.6 3.6 7.2-7.4" fill="none" stroke="#fff" stroke-width="2"/></svg>
<div class="t" style="left:305.0px;top:234.8px;font-size:12.0px;color:#1a68a8;letter-spacing:0.00px;transform:scaleX(0.9037);transform-origin:0 0;">SO-0030538</div>
<div class="t" style="left:437.3px;top:234.8px;font-size:12.0px;color:#2b2b2b;letter-spacing:0.00px;transform:scaleX(1.0244);transform-origin:0 0;">11/11/2022</div>
<div class="t" style="left:524.7px;top:234.8px;font-size:12.5px;color:#155e98;font-weight:bold;letter-spacing:0.00px;transform:scaleX(0.9848);transform-origin:0 0;">SHO-0030538</div>
<div class="t" style="left:649.8px;top:234.8px;font-size:12.0px;color:#2b2b2b;letter-spacing:0.00px;transform:scaleX(0.9660);transform-origin:0 0;">Dodosha</div>
<div class="t" style="left:769.7px;top:234.8px;font-size:12.0px;color:#2a3f55;letter-spacing:0.00px;transform:scaleX(0.9200);transform-origin:0 0;">$24.00</div>
<div class="t" style="left:909.8px;top:234.8px;font-size:12.0px;color:#2590e0;letter-spacing:0.00px;transform:scaleX(0.9498);transform-origin:0 0;">Ready to Ship</div>
<div class="t" style="left:1040.0px;top:234.8px;font-size:12.0px;color:#2590e0;letter-spacing:0.00px;transform:scaleX(0.9563);transform-origin:0 0;">Ready to Pick</div>
<div class="a" style="left:276px;top:302px;width:18px;height:18px;background:#015c95;border-radius:2px"></div>
<svg style="left:276px;top:302px" width="18" height="18" viewBox="0 0 18 18"><path d="M3.5 9.2l3.6 3.6 7.2-7.4" fill="none" stroke="#fff" stroke-width="2"/></svg>
<div class="t" style="left:305.0px;top:261.8px;font-size:12.0px;color:#1a68a8;letter-spacing:0.00px;transform:scaleX(0.9037);transform-origin:0 0;">SO-0030536</div>
<div class="t" style="left:437.3px;top:261.8px;font-size:12.0px;color:#2b2b2b;letter-spacing:0.00px;transform:scaleX(1.0244);transform-origin:0 0;">11/11/2022</div>
<div class="t" style="left:524.7px;top:261.8px;font-size:12.5px;color:#155e98;font-weight:bold;letter-spacing:0.00px;transform:scaleX(0.9848);transform-origin:0 0;">SHO-0030536</div>
<div class="t" style="left:649.8px;top:261.8px;font-size:12.0px;color:#2b2b2b;letter-spacing:0.00px;transform:scaleX(0.9660);transform-origin:0 0;">Dodosha</div>
<div class="t" style="left:769.7px;top:261.8px;font-size:12.0px;color:#2a3f55;letter-spacing:0.00px;transform:scaleX(0.9200);transform-origin:0 0;">$24.00</div>
<div class="t" style="left:909.8px;top:261.8px;font-size:12.0px;color:#2590e0;letter-spacing:0.00px;transform:scaleX(0.9498);transform-origin:0 0;">Ready to Ship</div>
<div class="t" style="left:1040.0px;top:261.8px;font-size:12.0px;color:#2590e0;letter-spacing:0.00px;transform:scaleX(0.9563);transform-origin:0 0;">Ready to Pick</div>
<div class="a" style="left:276px;top:332px;width:18px;height:18px;background:#015c95;border-radius:2px"></div>
<svg style="left:276px;top:332px" width="18" height="18" viewBox="0 0 18 18"><path d="M3.5 9.2l3.6 3.6 7.2-7.4" fill="none" stroke="#fff" stroke-width="2"/></svg>
<div class="t" style="left:305.0px;top:291.3px;font-size:12.0px;color:#1a68a8;letter-spacing:0.00px;transform:scaleX(0.9037);transform-origin:0 0;">SO-0030533</div>
<div class="t" style="left:437.3px;top:291.3px;font-size:12.0px;color:#2b2b2b;letter-spacing:0.00px;transform:scaleX(1.0244);transform-origin:0 0;">11/11/2022</div>
<div class="t" style="left:524.7px;top:291.3px;font-size:12.5px;color:#155e98;font-weight:bold;letter-spacing:0.00px;transform:scaleX(0.9848);transform-origin:0 0;">SHO-0030533</div>
<div class="t" style="left:649.8px;top:291.3px;font-size:12.0px;color:#2b2b2b;letter-spacing:0.00px;transform:scaleX(0.9660);transform-origin:0 0;">Dodosha</div>
<div class="t" style="left:769.7px;top:291.3px;font-size:12.0px;color:#2a3f55;letter-spacing:0.00px;transform:scaleX(0.9200);transform-origin:0 0;">$24.00</div>
<div class="t" style="left:909.8px;top:291.3px;font-size:12.0px;color:#2590e0;letter-spacing:0.00px;transform:scaleX(0.9498);transform-origin:0 0;">Ready to Ship</div>
<div class="t" style="left:1040.0px;top:291.3px;font-size:12.0px;color:#2590e0;letter-spacing:0.00px;transform:scaleX(0.9563);transform-origin:0 0;">Ready to Pick</div>
<div class="t" style="left:1152.8px;top:291.3px;font-size:12.0px;color:#2b2b2b;letter-spacing:0.00px;transform:scaleX(0.8600);transform-origin:0 0;">FedEx</div>
<div class="a" style="left:276px;top:362px;width:18px;height:18px;border:2px solid #015c95;border-radius:2px"></div>
<div class="t" style="left:305.0px;top:322.3px;font-size:12.0px;color:#1a68a8;letter-spacing:0.00px;transform:scaleX(0.9037);transform-origin:0 0;">SO-0030523</div>
<div class="t" style="left:437.3px;top:322.3px;font-size:12.0px;color:#2b2b2b;letter-spacing:0.00px;transform:scaleX(1.0244);transform-origin:0 0;">11/11/2022</div>
<div class="t" style="left:524.7px;top:322.3px;font-size:12.5px;color:#155e98;font-weight:bold;letter-spacing:0.00px;transform:scaleX(0.9848);transform-origin:0 0;">SHO-0030523</div>
<div class="t" style="left:649.8px;top:322.3px;font-size:12.0px;color:#2b2b2b;letter-spacing:0.00px;transform:scaleX(0.9660);transform-origin:0 0;">Dodosha</div>
<div class="t" style="left:769.7px;top:322.3px;font-size:12.0px;color:#2a3f55;letter-spacing:0.00px;transform:scaleX(0.9200);transform-origin:0 0;">$24.00</div>
<div class="t" style="left:909.8px;top:322.3px;font-size:12.0px;color:#f07d12;letter-spacing:0.00px;transform:scaleX(0.9693);transform-origin:0 0;">Not Ready to Ship</div>
<div class="t" style="left:1040.0px;top:322.3px;font-size:12.0px;color:#f07d12;letter-spacing:0.00px;transform:scaleX(0.9746);transform-origin:0 0;">Not Ready to Pick</div>
<div class="a" style="left:276px;top:390px;width:18px;height:18px;border:2px solid #015c95;border-radius:2px"></div>
<div class="t" style="left:305.0px;top:350.3px;font-size:12.0px;color:#1a68a8;letter-spacing:0.00px;transform:scaleX(0.9037);transform-origin:0 0;">SO-0030461</div>
<div class="t" style="left:437.3px;top:350.3px;font-size:12.0px;color:#2b2b2b;letter-spacing:0.00px;transform:scaleX(1.0090);transform-origin:0 0;">11/08/2022</div>
<div class="t" style="left:524.7px;top:350.3px;font-size:12.5px;color:#155e98;font-weight:bold;letter-spacing:0.00px;transform:scaleX(0.9848);transform-origin:0 0;">SHO-0030461</div>
<div class="t" style="left:649.8px;top:350.3px;font-size:12.0px;color:#2b2b2b;letter-spacing:0.00px;transform:scaleX(0.9660);transform-origin:0 0;">Dodosha</div>
<div class="t" style="left:769.7px;top:350.3px;font-size:12.0px;color:#2a3f55;letter-spacing:0.00px;transform:scaleX(0.9200);transform-origin:0 0;">$24.00</div>
<div class="t" style="left:909.8px;top:350.3px;font-size:12.0px;color:#2590e0;letter-spacing:0.00px;transform:scaleX(0.9498);transform-origin:0 0;">Ready to Ship</div>
<div class="t" style="left:1040.0px;top:350.3px;font-size:12.0px;color:#4cae4f;letter-spacing:0.00px;transform:scaleX(0.9384);transform-origin:0 0;">Picked</div>
<div class="t" style="left:1152.8px;top:350.3px;font-size:12.0px;color:#2b2b2b;letter-spacing:0.00px;transform:scaleX(0.8600);transform-origin:0 0;">LTL</div>
<div class="t" style="left:1243.0px;top:350.3px;font-size:12.0px;color:#f07d12;letter-spacing:0.00px;transform:scaleX(0.9794);transform-origin:0 0;">Pending carrier</div>
<div class="a" style="left:276px;top:416px;width:18px;height:18px;border:2px solid #015c95;border-radius:2px"></div>
<div class="t" style="left:305.0px;top:375.3px;font-size:12.0px;color:#1a68a8;letter-spacing:0.00px;transform:scaleX(0.9037);transform-origin:0 0;">SO-0030484</div>
<div class="t" style="left:437.3px;top:375.3px;font-size:12.0px;color:#2b2b2b;letter-spacing:0.00px;transform:scaleX(1.0090);transform-origin:0 0;">11/10/2022</div>
<div class="t" style="left:524.7px;top:375.3px;font-size:12.5px;color:#155e98;font-weight:bold;letter-spacing:0.00px;transform:scaleX(0.9848);transform-origin:0 0;">SHO-0030484</div>
<div class="t" style="left:649.8px;top:375.3px;font-size:12.0px;color:#2b2b2b;letter-spacing:0.00px;transform:scaleX(0.9660);transform-origin:0 0;">Dodosha</div>
<div class="t" style="left:769.7px;top:375.3px;font-size:12.0px;color:#2a3f55;letter-spacing:0.00px;transform:scaleX(0.9200);transform-origin:0 0;">$24.00</div>
<div class="t" style="left:909.8px;top:375.3px;font-size:12.0px;color:#f07d12;letter-spacing:0.00px;transform:scaleX(0.9693);transform-origin:0 0;">Not Ready to Ship</div>
<div class="t" style="left:1040.0px;top:375.3px;font-size:12.0px;color:#2590e0;letter-spacing:0.00px;transform:scaleX(0.9563);transform-origin:0 0;">Ready to Pick</div>
<div class="a" style="left:276px;top:440px;width:18px;height:18px;border:2px solid #015c95;border-radius:2px"></div>
<div class="t" style="left:305.0px;top:400.3px;font-size:12.0px;color:#1a68a8;letter-spacing:0.00px;transform:scaleX(0.9037);transform-origin:0 0;">SO-0030480</div>
<div class="t" style="left:437.3px;top:400.3px;font-size:12.0px;color:#2b2b2b;letter-spacing:0.00px;transform:scaleX(1.0090);transform-origin:0 0;">11/09/2022</div>
<div class="t" style="left:524.7px;top:400.3px;font-size:12.5px;color:#155e98;font-weight:bold;letter-spacing:0.00px;transform:scaleX(0.9848);transform-origin:0 0;">SHO-0030480</div>
<div class="t" style="left:649.8px;top:400.3px;font-size:12.0px;color:#2b2b2b;letter-spacing:0.00px;transform:scaleX(0.9660);transform-origin:0 0;">Dodosha</div>
<div class="t" style="left:769.7px;top:400.3px;font-size:12.0px;color:#2a3f55;letter-spacing:0.00px;transform:scaleX(0.9200);transform-origin:0 0;">$24.00</div>
<div class="t" style="left:909.8px;top:400.3px;font-size:12.0px;color:#2590e0;letter-spacing:0.00px;transform:scaleX(0.9498);transform-origin:0 0;">Ready to Ship</div>
<div class="t" style="left:1040.0px;top:400.3px;font-size:12.0px;color:#2590e0;letter-spacing:0.00px;transform:scaleX(0.9563);transform-origin:0 0;">Ready to Pick</div>
<div class="a" style="left:276px;top:466px;width:18px;height:18px;border:2px solid #015c95;border-radius:2px"></div>
<div class="t" style="left:305.0px;top:425.3px;font-size:12.0px;color:#1a68a8;letter-spacing:0.00px;transform:scaleX(0.9037);transform-origin:0 0;">SO-0030476</div>
<div class="t" style="left:437.3px;top:425.3px;font-size:12.0px;color:#2b2b2b;letter-spacing:0.00px;transform:scaleX(1.0090);transform-origin:0 0;">11/09/2022</div>
<div class="t" style="left:524.7px;top:425.3px;font-size:12.5px;color:#155e98;font-weight:bold;letter-spacing:0.00px;transform:scaleX(0.9848);transform-origin:0 0;">SHO-0030476</div>
<div class="t" style="left:649.8px;top:425.3px;font-size:12.0px;color:#2b2b2b;letter-spacing:0.00px;transform:scaleX(0.9660);transform-origin:0 0;">Dodosha</div>
<div class="t" style="left:769.7px;top:425.3px;font-size:12.0px;color:#2a3f55;letter-spacing:0.00px;transform:scaleX(0.9200);transform-origin:0 0;">$687.93</div>
<div class="t" style="left:909.8px;top:425.3px;font-size:12.0px;color:#f07d12;letter-spacing:0.00px;transform:scaleX(0.9693);transform-origin:0 0;">Not Ready to Ship</div>
<div class="t" style="left:1040.0px;top:425.3px;font-size:12.0px;color:#2590e0;letter-spacing:0.00px;transform:scaleX(0.9563);transform-origin:0 0;">Ready to Pick</div>
<div class="a" style="left:276px;top:490px;width:18px;height:18px;border:2px solid #015c95;border-radius:2px"></div>
<div class="t" style="left:305.0px;top:450.3px;font-size:12.0px;color:#1a68a8;letter-spacing:0.00px;transform:scaleX(0.9037);transform-origin:0 0;">SO-0030472</div>
<div class="t" style="left:437.3px;top:450.3px;font-size:12.0px;color:#2b2b2b;letter-spacing:0.00px;transform:scaleX(1.0090);transform-origin:0 0;">11/09/2022</div>
<div class="t" style="left:524.7px;top:450.3px;font-size:12.5px;color:#155e98;font-weight:bold;letter-spacing:0.00px;transform:scaleX(0.9848);transform-origin:0 0;">SHO-0030472</div>
<div class="t" style="left:649.8px;top:450.3px;font-size:12.0px;color:#2b2b2b;letter-spacing:0.00px;transform:scaleX(0.9660);transform-origin:0 0;">WIEDER</div>
<div class="t" style="left:769.7px;top:450.3px;font-size:12.0px;color:#2a3f55;letter-spacing:0.00px;transform:scaleX(0.9200);transform-origin:0 0;">$0.00</div>
<div class="t" style="left:909.8px;top:450.3px;font-size:12.0px;color:#f07d12;letter-spacing:0.00px;transform:scaleX(0.9572);transform-origin:0 0;">Partially Ready to Ship</div>
<div class="t" style="left:1040.0px;top:450.3px;font-size:12.0px;color:#2590e0;letter-spacing:0.00px;transform:scaleX(0.9563);transform-origin:0 0;">Ready to Pick</div>
<div class="a" style="left:276px;top:516px;width:18px;height:18px;border:2px solid #015c95;border-radius:2px"></div>
<div class="t" style="left:305.0px;top:475.3px;font-size:12.0px;color:#1a68a8;letter-spacing:0.00px;transform:scaleX(0.9037);transform-origin:0 0;">SO-0030471</div>
<div class="t" style="left:437.3px;top:475.3px;font-size:12.0px;color:#2b2b2b;letter-spacing:0.00px;transform:scaleX(1.0090);transform-origin:0 0;">11/09/2022</div>
<div class="t" style="left:524.7px;top:475.3px;font-size:12.5px;color:#155e98;font-weight:bold;letter-spacing:0.00px;transform:scaleX(0.9848);transform-origin:0 0;">SHO-0030471</div>
<div class="t" style="left:649.8px;top:475.3px;font-size:12.0px;color:#2b2b2b;letter-spacing:0.00px;transform:scaleX(0.9660);transform-origin:0 0;">Dodosha</div>
<div class="t" style="left:769.7px;top:475.3px;font-size:12.0px;color:#2a3f55;letter-spacing:0.00px;transform:scaleX(0.9200);transform-origin:0 0;">$1,232.30</div>
<div class="t" style="left:909.8px;top:475.3px;font-size:12.0px;color:#f07d12;letter-spacing:0.00px;transform:scaleX(0.9572);transform-origin:0 0;">Partially Ready to Ship</div>
<div class="t" style="left:1040.0px;top:475.3px;font-size:12.0px;color:#2590e0;letter-spacing:0.00px;transform:scaleX(0.9563);transform-origin:0 0;">Ready to Pick</div>
<div class="a" style="left:276px;top:540px;width:18px;height:18px;border:2px solid #015c95;border-radius:2px"></div>
<div class="t" style="left:305.0px;top:500.3px;font-size:12.0px;color:#1a68a8;letter-spacing:0.00px;transform:scaleX(0.9037);transform-origin:0 0;">SO-0030470</div>
<div class="t" style="left:437.3px;top:500.3px;font-size:12.0px;color:#2b2b2b;letter-spacing:0.00px;transform:scaleX(1.0090);transform-origin:0 0;">11/09/2022</div>
<div class="t" style="left:524.7px;top:500.3px;font-size:12.5px;color:#155e98;font-weight:bold;letter-spacing:0.00px;transform:scaleX(0.9848);transform-origin:0 0;">SHO-0030470</div>
<div class="t" style="left:649.8px;top:500.3px;font-size:12.0px;color:#2b2b2b;letter-spacing:0.00px;transform:scaleX(0.9660);transform-origin:0 0;">Dodosha</div>
<div class="t" style="left:769.7px;top:500.3px;font-size:12.0px;color:#2a3f55;letter-spacing:0.00px;transform:scaleX(0.9200);transform-origin:0 0;">$1,201.65</div>
<div class="t" style="left:909.8px;top:500.3px;font-size:12.0px;color:#f07d12;letter-spacing:0.00px;transform:scaleX(0.9572);transform-origin:0 0;">Partially Ready to Ship</div>
<div class="t" style="left:1040.0px;top:500.3px;font-size:12.0px;color:#2590e0;letter-spacing:0.00px;transform:scaleX(0.9563);transform-origin:0 0;">Ready to Pick</div>
<div class="t" style="left:1152.8px;top:500.3px;font-size:12.0px;color:#2b2b2b;letter-spacing:0.00px;transform:scaleX(0.8600);transform-origin:0 0;">FedEx</div>
<div class="a" style="left:276px;top:566px;width:18px;height:18px;border:2px solid #015c95;border-radius:2px"></div>
<div class="t" style="left:305.0px;top:525.3px;font-size:12.0px;color:#1a68a8;letter-spacing:0.00px;transform:scaleX(0.9037);transform-origin:0 0;">SO-0030468</div>
<div class="t" style="left:437.3px;top:525.3px;font-size:12.0px;color:#2b2b2b;letter-spacing:0.00px;transform:scaleX(1.0090);transform-origin:0 0;">11/09/2022</div>
<div class="t" style="left:524.7px;top:525.3px;font-size:12.5px;color:#155e98;font-weight:bold;letter-spacing:0.00px;transform:scaleX(0.9848);transform-origin:0 0;">SHO-0030468</div>
<div class="t" style="left:649.8px;top:525.3px;font-size:12.0px;color:#2b2b2b;letter-spacing:0.00px;transform:scaleX(0.9660);transform-origin:0 0;">Dodosha</div>
<div class="t" style="left:769.7px;top:525.3px;font-size:12.0px;color:#2a3f55;letter-spacing:0.00px;transform:scaleX(0.9200);transform-origin:0 0;">$1,242.97</div>
<div class="t" style="left:909.8px;top:525.3px;font-size:12.0px;color:#f07d12;letter-spacing:0.00px;transform:scaleX(0.9572);transform-origin:0 0;">Partially Ready to Ship</div>
<div class="t" style="left:1040.0px;top:525.3px;font-size:12.0px;color:#2590e0;letter-spacing:0.00px;transform:scaleX(0.9563);transform-origin:0 0;">Ready to Pick</div>
<div class="a" style="left:276px;top:590px;width:18px;height:18px;border:2px solid #015c95;border-radius:2px"></div>
<div class="t" style="left:305.0px;top:550.3px;font-size:12.0px;color:#1a68a8;letter-spacing:0.00px;transform:scaleX(0.9037);transform-origin:0 0;">SO-0030467</div>
<div class="t" style="left:437.3px;top:550.3px;font-size:12.0px;color:#2b2b2b;letter-spacing:0.00px;transform:scaleX(1.0090);transform-origin:0 0;">11/09/2022</div>
<div class="t" style="left:524.7px;top:550.3px;font-size:12.5px;color:#155e98;font-weight:bold;letter-spacing:0.00px;transform:scaleX(0.9848);transform-origin:0 0;">SHO-0030467</div>
<div class="t" style="left:649.8px;top:550.3px;font-size:12.0px;color:#2b2b2b;letter-spacing:0.00px;transform:scaleX(0.9660);transform-origin:0 0;">Dodosha</div>
<div class="t" style="left:769.7px;top:550.3px;font-size:12.0px;color:#2a3f55;letter-spacing:0.00px;transform:scaleX(0.9200);transform-origin:0 0;">$1,896.22</div>
<div class="t" style="left:909.8px;top:550.3px;font-size:12.0px;color:#f07d12;letter-spacing:0.00px;transform:scaleX(0.9572);transform-origin:0 0;">Partially Ready to Ship</div>
<div class="t" style="left:1040.0px;top:550.3px;font-size:12.0px;color:#2590e0;letter-spacing:0.00px;transform:scaleX(0.9563);transform-origin:0 0;">Ready to Pick</div>
<div class="a" style="left:276px;top:616px;width:18px;height:18px;border:2px solid #015c95;border-radius:2px"></div>
<div class="t" style="left:305.0px;top:575.3px;font-size:12.0px;color:#1a68a8;letter-spacing:0.00px;transform:scaleX(0.9037);transform-origin:0 0;">SO-0030466</div>
<div class="t" style="left:437.3px;top:575.3px;font-size:12.0px;color:#2b2b2b;letter-spacing:0.00px;transform:scaleX(1.0090);transform-origin:0 0;">11/09/2022</div>
<div class="t" style="left:524.7px;top:575.3px;font-size:12.5px;color:#155e98;font-weight:bold;letter-spacing:0.00px;transform:scaleX(0.9848);transform-origin:0 0;">SHO-0030466</div>
<div class="t" style="left:649.8px;top:575.3px;font-size:12.0px;color:#2b2b2b;letter-spacing:0.00px;transform:scaleX(0.9660);transform-origin:0 0;">Dodosha</div>
<div class="t" style="left:769.7px;top:575.3px;font-size:12.0px;color:#2a3f55;letter-spacing:0.00px;transform:scaleX(0.9200);transform-origin:0 0;">$233.97</div>
<div class="t" style="left:909.8px;top:575.3px;font-size:12.0px;color:#f07d12;letter-spacing:0.00px;transform:scaleX(0.9572);transform-origin:0 0;">Partially Ready to Ship</div>
<div class="t" style="left:1040.0px;top:575.3px;font-size:12.0px;color:#2590e0;letter-spacing:0.00px;transform:scaleX(0.9563);transform-origin:0 0;">Ready to Pick</div>
<div class="a" style="left:276px;top:640px;width:18px;height:18px;border:2px solid #015c95;border-radius:2px"></div>
<div class="t" style="left:305.0px;top:599.3px;font-size:12.0px;color:#1a68a8;letter-spacing:0.00px;transform:scaleX(0.9037);transform-origin:0 0;">SO-0030465</div>
<div class="t" style="left:437.3px;top:599.3px;font-size:12.0px;color:#2b2b2b;letter-spacing:0.00px;transform:scaleX(1.0090);transform-origin:0 0;">11/09/2022</div>
<div class="t" style="left:524.7px;top:599.3px;font-size:12.5px;color:#155e98;font-weight:bold;letter-spacing:0.00px;transform:scaleX(0.9848);transform-origin:0 0;">SHO-0030465</div>
<div class="t" style="left:649.8px;top:599.3px;font-size:12.0px;color:#2b2b2b;letter-spacing:0.00px;transform:scaleX(0.9660);transform-origin:0 0;">Dodosha</div>
<div class="t" style="left:769.7px;top:599.3px;font-size:12.0px;color:#2a3f55;letter-spacing:0.00px;transform:scaleX(0.9200);transform-origin:0 0;">$46.79</div>
<div class="t" style="left:909.8px;top:599.3px;font-size:12.0px;color:#f07d12;letter-spacing:0.00px;transform:scaleX(0.9572);transform-origin:0 0;">Partially Ready to Ship</div>
<div class="t" style="left:1040.0px;top:599.3px;font-size:12.0px;color:#2590e0;letter-spacing:0.00px;transform:scaleX(0.9563);transform-origin:0 0;">Ready to Pick</div>
<div class="a" style="left:270px;top:270.6px;width:1081px;height:1.5px;background:#1f5f96;"></div>
<div class="a" style="left:270px;top:297px;width:1081px;height:2px;background:#1f5f96;"></div>
<div class="a" style="left:270px;top:324px;width:1081px;height:2px;background:#1f5f96;"></div>
<div class="a" style="left:270px;top:355.5px;width:1081px;height:1.8px;background:#1f5f96;"></div>
<div class="a" style="left:1355px;top:206px;width:8px;height:149px;background:#d4d4d4;"></div>
<div class="a" style="left:1350px;top:159px;width:1px;height:502px;background:#e6e6e6;"></div>
<svg style="left:1355.5px;top:194.5px" width="8" height="5" viewBox="0 0 8 5"><path d="M0.5 4.5L4 1l3.5 3.5" fill="none" stroke="#d0d0d0" stroke-width="1"/></svg>
<svg style="left:1355.5px;top:652.5px" width="8" height="5" viewBox="0 0 8 5"><path d="M0.5 0.5L4 4l3.5-3.5" fill="none" stroke="#d0d0d0" stroke-width="1"/></svg>
<div class="t" style="left:1106.2px;top:625.8px;font-size:12.0px;color:#2b2b2b;letter-spacing:0.00px;transform:scaleX(0.9407);transform-origin:0 0;">Total Pallets:</div>
<div class="t" style="left:1173.9px;top:625.8px;font-size:12.0px;color:#111;font-weight:bold;letter-spacing:0.00px;transform:scaleX(0.9590);transform-origin:0 0;">0</div>
<div class="t" style="left:1191.0px;top:625.8px;font-size:12.0px;color:#2b2b2b;letter-spacing:0.00px;transform:scaleX(0.9725);transform-origin:0 0;">Total Cartons:</div>
<div class="t" style="left:1265.6px;top:625.8px;font-size:12.0px;color:#111;font-weight:bold;letter-spacing:0.00px;transform:scaleX(1.0039);transform-origin:0 0;">0</div>
<div class="t" style="left:1283.0px;top:625.8px;font-size:12.0px;color:#2b2b2b;letter-spacing:0.00px;transform:scaleX(0.9577);transform-origin:0 0;">Total CBM:</div>
<div class="t" style="left:1342.6px;top:625.8px;font-size:12.0px;color:#111;font-weight:bold;letter-spacing:0.00px;transform:scaleX(1.0039);transform-origin:0 0;">0</div>
<div class="a" style="left:270px;top:690px;width:1095px;height:1px;background:#e4e4e4;"></div>
<div class="a" style="left:280px;top:701px;width:109px;height:25px;background:#015c95;border-radius:1.5px"></div>
<div class="t" style="left:294.6px;top:664.3px;font-size:12.5px;color:#fff;letter-spacing:0.00px;transform:scaleX(0.8446);transform-origin:0 0;">ASSIGN TRUCK</div>
<div class="a" style="left:399px;top:701px;width:134px;height:25px;background:#015c95;border-radius:1.5px"></div>
<div class="t" style="left:413.6px;top:664.3px;font-size:12.5px;color:#fff;letter-spacing:0.00px;transform:scaleX(0.8756);transform-origin:0 0;">ADD LANDED COST</div>
<div class="a" style="left:543px;top:701px;width:75px;height:25px;background:#015c95;border-radius:1.5px"></div>
<div class="t" style="left:565.6px;top:664.3px;font-size:12.5px;color:#fff;letter-spacing:0.00px;transform:scaleX(0.8349);transform-origin:0 0;">SPLIT</div>
<div class="a" style="left:619px;top:701px;width:22px;height:25px;background:#015c95;border-radius:1.5px"></div>
<svg style="left:626.0px;top:712.0px" width="8" height="4" viewBox="0 0 8 4"><path d="M0 0h8L4 4z" fill="#fff"/></svg>
<div class="a" style="left:651px;top:701px;width:92px;height:25px;background:#015c95;border-radius:1.5px"></div>
<div class="t" style="left:665.6px;top:664.3px;font-size:12.5px;color:#fff;letter-spacing:0.00px;transform:scaleX(0.8422);transform-origin:0 0;">VIEW ITEMS</div>
<div class="a" style="left:744px;top:701px;width:22px;height:25px;background:#015c95;border-radius:1.5px"></div>
<svg style="left:751.0px;top:712.0px" width="8" height="4" viewBox="0 0 8 4"><path d="M0 0h8L4 4z" fill="#fff"/></svg>
<div class="a" style="left:1155px;top:701px;width:74px;height:25px;background:#015c95;border-radius:1.5px"></div>
<div class="t" style="left:1178.6px;top:664.3px;font-size:12.5px;color:#fff;letter-spacing:0.00px;transform:scaleX(0.8912);transform-origin:0 0;">SHIP</div>
<div class="a" style="left:1231px;top:701px;width:21px;height:25px;background:#015c95;border-radius:1.5px"></div>
<svg style="left:1237.5px;top:712.0px" width="8" height="4" viewBox="0 0 8 4"><path d="M0 0h8L4 4z" fill="#fff"/></svg>
<div class="a" style="left:1263px;top:701px;width:87px;height:25px;background:#015c95;border-radius:1.5px"></div>
<div class="t" style="left:1277.6px;top:664.3px;font-size:12.5px;color:#fff;letter-spacing:0.00px;transform:scaleX(0.8373);transform-origin:0 0;">SCHEDULE</div>
<div class="a" style="left:508px;top:264px;width:350px;height:200px;background:#fff;border:1px solid #3a3a3a"></div>
<div class="a" style="left:508px;top:264px;width:350px;height:36px;background:#424242;"></div>
<svg style="left:527px;top:273px" width="18" height="18" viewBox="0 0 18 18">
<circle cx="9" cy="9" r="9" fill="#fff"/>
<path d="M8.8 0.9 A8.1 8.1 0 0 0 8.8 17.1 Z" fill="#0a5fa0"/>
<rect x="6" y="5.8" width="2.8" height="1.4" fill="#fff"/><rect x="5.1" y="8.1" width="3.7" height="1.8" fill="#fff"/><rect x="6" y="10.8" width="2.8" height="1.4" fill="#fff"/>
<rect x="8.8" y="5.8" width="3.2" height="1.4" fill="#0a5fa0"/><rect x="8.8" y="8.1" width="4.1" height="1.8" fill="#0a5fa0"/><rect x="8.8" y="10.8" width="3.2" height="1.4" fill="#0a5fa0"/>
</svg>
<div class="t" style="left:563.2px;top:234.2px;font-size:14.5px;color:#f0f0f0;letter-spacing:0.00px;transform:scaleX(0.8979);transform-origin:0 0;">Bulk Ship</div>
<svg style="left:824px;top:277px" width="11" height="11"><path d="M0.5 0.5l10 10M10.5 0.5l-10 10" stroke="#e8e8e8" stroke-width="1.2"/></svg>
<div class="t" style="left:525.0px;top:275.7px;font-size:12.0px;color:#222;letter-spacing:0.00px;transform:scaleX(0.9803);transform-origin:0 0;">Orders to bulk ship:</div>
<div class="t" style="left:674.4px;top:275.7px;font-size:12.0px;color:#222;font-weight:bold;letter-spacing:0.00px;transform:scaleX(0.9500);transform-origin:0 0;">3</div>
<div class="t" style="left:622.6px;top:302.8px;font-size:12.5px;color:#222;font-weight:bold;letter-spacing:0.00px;transform:scaleX(0.9363);transform-origin:0 0;">Operation Completed</div>
<div class="a" style="left:509px;top:423px;width:348px;height:1px;background:#ececec;"></div>
<div class="a" style="left:519px;top:432px;width:74px;height:24px;background:#ececec"></div>
<div class="t" style="left:533.6px;top:394.8px;font-size:12.5px;color:#1a65a3;letter-spacing:0.00px;transform:scaleX(0.8677);transform-origin:0 0;">CANCEL</div>
</body></html>
